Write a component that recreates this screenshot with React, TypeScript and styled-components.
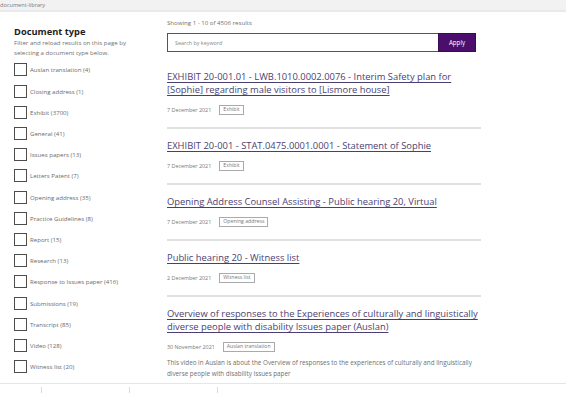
import React from "react";
import styled, { createGlobalStyle } from "styled-components";

const Global = createGlobalStyle`
  html, body { margin: 0; padding: 0; background: #fff; }
  body { font-family: "Open Sans", "Noto Sans", sans-serif; overflow: hidden; }
  * { box-sizing: border-box; }
`;

const TopBar = styled.div`
  height: 12px;
  background: #f2f2f2;
  border-bottom: 2px solid #e9e9e9;
  font-size: 5.6px;
  line-height: 10px;
  color: #7a7a7a;
  white-space: nowrap;
`;

const Layout = styled.div`
  display: grid;
  grid-template-columns: 167px 314px;
`;

const Sidebar = styled.aside`
  padding: 14px 0 0 14px;
`;

const Heading = styled.h2`
  margin: 0;
  font-size: 9.3px;
  line-height: 12px;
  font-weight: 700;
  color: #1e1e1e;
`;

const Intro = styled.p`
  margin: 0;
  font-size: 6.1px;
  line-height: 10px;
  color: #707070;
  width: 122px;
`;

const FilterList = styled.ul`
  list-style: none;
  margin: 1.4px 0 0;
  padding: 0;
`;

const FilterRow = styled.li`
  display: flex;
  align-items: center;
  gap: 3px;
  height: 21.2px;
`;

const Box = styled.span`
  width: 13px;
  height: 13px;
  border: 1px solid #4d4d4d;
  flex: none;
`;

const FilterLabel = styled.span`
  font-size: 6.1px;
  color: #6a6a6a;
`;

const Main = styled.main`
  padding-top: 6px;
`;

const Count = styled.div`
  font-size: 6.1px;
  line-height: 10px;
  color: #707070;
`;

const SearchRow = styled.form`
  display: flex;
  margin-top: 5px;
  width: 309px;
  height: 19px;
`;

const SearchInput = styled.div`
  flex: 1;
  border: 1px solid #555;
  border-right: none;
  font-size: 5.4px;
  color: #888;
  display: flex;
  align-items: center;
  padding-left: 7px;
`;

const ApplyButton = styled.div`
  width: 38px;
  background: #4b0e6c;
  color: #fff;
  font-size: 6.2px;
  display: flex;
  align-items: center;
  justify-content: center;
  border: 1px solid #3a0a55;
`;

const Results = styled.div`
  margin-top: 8px;
`;

const Item = styled.article<{ $last?: boolean }>`
  padding: 10px 0 ${(p) => (p.$last ? 4 : 12)}px;
  border-bottom: ${(p) => (p.$last ? "none" : "2px solid #e2e2e2")};
`;

const Title = styled.a`
  display: block;
  font-size: 9.4px;
  line-height: 13px;
  color: #4b3f72;
  text-decoration: underline;
  text-decoration-thickness: 0.6px;
  text-underline-offset: 1.5px;
`;

const Meta = styled.div`
  display: flex;
  align-items: center;
  gap: 8px;
  margin-top: 9px;
  height: 10px;
`;

const DateText = styled.span`
  font-size: 5.4px;
  color: #777;
`;

const Tag = styled.span`
  font-size: 5.2px;
  color: #777;
  border: 1px solid #aaa;
  padding: 0 3px;
  line-height: 7.5px;
`;

const Desc = styled.p`
  margin: 6px 0 0;
  font-size: 6.3px;
  line-height: 10.5px;
  color: #707070;
`;

const Footer = styled.div`
  display: flex;
  border-top: 1px solid #e6e6e6;
  height: 10px;
  padding-top: 3px;
`;

const FooterCell = styled.div<{ $w: number }>`
  width: ${(p) => p.$w}px;
  border-right: 1px solid #dcdcdc;
`;

const filters = [
  "Auslan translation (4)",
  "Closing address (1)",
  "Exhibit (3700)",
  "General (41)",
  "Issues papers (13)",
  "Letters Patent (7)",
  "Opening address (35)",
  "Practice Guidelines (8)",
  "Report (15)",
  "Research (13)",
  "Response to Issues paper (416)",
  "Submissions (19)",
  "Transcript (85)",
  "Video (128)",
  "Witness list (20)",
];

const results = [
  {
    title:
      "EXHIBIT 20-001.01 - LWB.1010.0002.0076 - Interim Safety plan for [Sophie] regarding male visitors to [Lismore house]",
    date: "7 December 2021",
    tag: "Exhibit",
  },
  {
    title: "EXHIBIT 20-001 - STAT.0475.0001.0001 - Statement of Sophie",
    date: "7 December 2021",
    tag: "Exhibit",
  },
  {
    title: "Opening Address Counsel Assisting - Public hearing 20, Virtual",
    date: "7 December 2021",
    tag: "Opening address",
  },
  {
    title: "Public hearing 20 - Witness list",
    date: "2 December 2021",
    tag: "Witness list",
  },
  {
    title:
      "Overview of responses to the Experiences of culturally and linguistically diverse people with disability Issues paper (Auslan)",
    date: "30 November 2021",
    tag: "Auslan translation",
    desc: "This video in Auslan is about the Overview of responses to the experiences of culturally and linguistically diverse people with disability Issues paper",
  },
];

export default function App() {
  return (
    <>
      <Global />
      <TopBar>document-library</TopBar>
      <Layout>
        <Sidebar>
          <Heading>Document type</Heading>
          <Intro>Filter and reload results on this page by selecting a document type below.</Intro>
          <FilterList>
            {filters.map((f) => (
              <FilterRow key={f}>
                <Box />
                <FilterLabel>{f}</FilterLabel>
              </FilterRow>
            ))}
          </FilterList>
        </Sidebar>
        <Main>
          <Count>Showing 1 - 10 of 4506 results</Count>
          <SearchRow>
            <SearchInput>Search by keyword</SearchInput>
            <ApplyButton>Apply</ApplyButton>
          </SearchRow>
          <Results>
            {results.map((r, i) => (
              <Item key={i} $last={i === results.length - 1}>
                <Title href="#">{r.title}</Title>
                <Meta>
                  <DateText>{r.date}</DateText>
                  <Tag>{r.tag}</Tag>
                </Meta>
                {r.desc && <Desc>{r.desc}</Desc>}
              </Item>
            ))}
          </Results>
        </Main>
      </Layout>
      <Footer>
        <FooterCell $w={42} />
        <FooterCell $w={88} />
        <FooterCell $w={88} />
      </Footer>
    </>
  );
}
